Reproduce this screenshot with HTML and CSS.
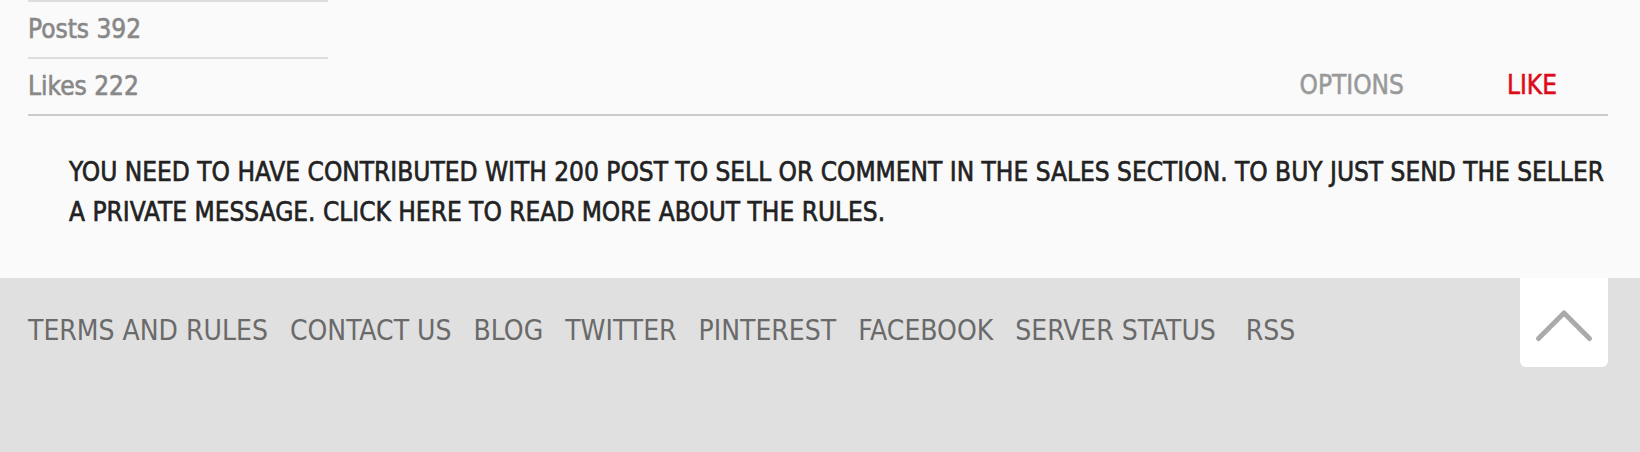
FILE: index.html
```html
<!DOCTYPE html>
<html lang="en">
<head>
<meta charset="utf-8">
<title>Post footer</title>
<link rel="stylesheet" href="styles.css">
</head>
<body>
<main class="content">
  <div class="post-footer">
    <ul class="stats">
      <li class="stat">Posts 392</li>
      <li class="stat">Likes 222</li>
    </ul>
    <div class="actions">
      <a class="action" href="#">OPTIONS</a>
      <a class="action action-like" href="#">LIKE</a>
    </div>
  </div>
  <p class="notice">YOU NEED TO HAVE CONTRIBUTED WITH 200 POST TO SELL OR COMMENT IN THE SALES SECTION. TO BUY JUST SEND THE SELLER<br>A PRIVATE MESSAGE. CLICK HERE TO READ MORE ABOUT THE RULES.</p>
</main>
<footer class="site-footer">
  <nav class="footer-links">
    <a href="#">TERMS AND RULES</a>
    <a href="#">CONTACT US</a>
    <a href="#">BLOG</a>
    <a href="#">TWITTER</a>
    <a href="#">PINTEREST</a>
    <a href="#">FACEBOOK</a>
    <a href="#">SERVER STATUS</a>
    <a href="#" class="rss">RSS</a>
  </nav>
  <a class="to-top" href="#" aria-label="Back to top">
    <svg width="88" height="89" viewBox="0 0 88 89"><polyline points="18.5,60.5 44,35 69.5,60.5" fill="none" stroke="#aaaaaa" stroke-width="5" stroke-linecap="round" stroke-linejoin="round"/></svg>
  </a>
</footer>
</body>
</html>
```
FILE: styles.css
```css
html, body {
  margin: 0;
  padding: 0;
}
body {
  background: #fafafa;
  font-family: "DejaVu Sans Condensed", "DejaVu Sans", sans-serif;
  font-stretch: condensed;
  height: 452px;
  overflow: hidden;
  display: flex;
  flex-direction: column;
}
a {
  text-decoration: none;
}
.content {
  padding: 0 32px 0 28px;
}
.post-footer {
  display: flex;
  justify-content: space-between;
  align-items: flex-end;
  border-bottom: 2px solid #cccccc;
}
.stats {
  list-style: none;
  margin: 0;
  padding: 0;
  width: 300px;
}
.stat {
  border-top: 2px solid #dddddd;
  font-size: 26px;
  line-height: 55px;
  color: #888888;
  -webkit-text-stroke: 0.6px #888888;
}
.actions {
  display: flex;
  gap: 103px;
  padding-right: 51px;
  padding-bottom: 9px;
}
.action {
  font-size: 26px;
  line-height: 40px;
  color: #999999;
  -webkit-text-stroke: 0.5px #999999;
}
.action-like {
  color: #dd0a1a;
  -webkit-text-stroke: 0.5px #dd0a1a;
}
.notice {
  margin: 0;
  padding: 36px 0 46px 41px;
  font-size: 26px;
  line-height: 40px;
  color: #222222;
  -webkit-text-stroke: 0.6px #222222;
  white-space: nowrap;
}
.site-footer {
  flex: 1;
  background: #e0e0e0;
  display: flex;
  align-items: flex-start;
  padding: 0 32px 0 28px;
}
.footer-links {
  display: flex;
  gap: 22px;
  padding-top: 33px;
}
.footer-links a {
  font-size: 28px;
  line-height: 40px;
  color: #6a6a6a;
}
.footer-links .rss {
  margin-left: 8px;
}
.to-top {
  margin-left: auto;
  width: 88px;
  height: 89px;
  background: #ffffff;
  border-radius: 0 0 6px 6px;
  display: block;
}
.to-top svg {
  display: block;
}
```
